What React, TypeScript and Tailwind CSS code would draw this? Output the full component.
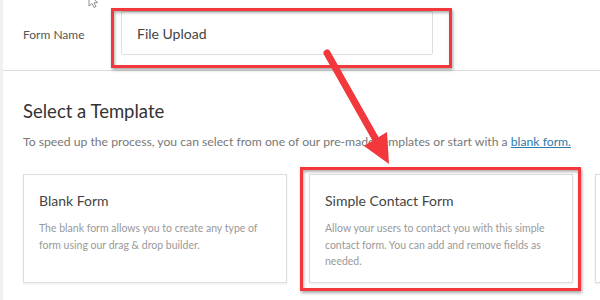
export default function App() {
  return (
    <div
      className="relative w-[600px] h-[300px] overflow-hidden bg-white border-l-[3px] border-[#f1f1f1]"
      style={{ fontFamily: 'Lato, "Open Sans", sans-serif' }}
    >
      {/* Form name row */}
      <div className="flex items-start h-[71px] border-b border-[#dcdcdc]">
        <div className="w-[118px] pl-[20px] pt-[26px] text-[12px] text-[#555]">Form Name</div>
        <div className="mt-[11px] w-[312px] h-[44px] border border-[#dedede] rounded-[2px] flex items-center pl-[15px] text-[14px] text-[#444]">
          File Upload
        </div>
      </div>

      {/* Template section */}
      <div className="pl-[20px] pt-[27px]">
        <h2 className="text-[18.5px] leading-[26px] text-[#333]">Select a Template</h2>
        <p className="mt-[9px] text-[12.2px] leading-[18px] text-[#777] whitespace-nowrap">
          To speed up the process, you can select from one of our pre-made templates or start with a{" "}
          <span className="text-[#2b7bab] underline">blank form.</span>
        </p>

        <div className="mt-[23px] flex gap-[22px]">
          {[
            {
              title: "Blank Form",
              desc: "The blank form allows you to create any type of form using our drag & drop builder.",
            },
            {
              title: "Simple Contact Form",
              desc: "Allow your users to contact you with this simple contact form. You can add and remove fields as needed.",
            },
            { title: "", desc: "" },
          ].map((c, i) => (
            <div
              key={i}
              className="shrink-0 w-[264px] h-[109px] border border-[#dddddd] shadow-[0_1px_2px_rgba(0,0,0,0.08)] pl-[15px] pr-[18px] pt-[15px]"
            >
              <div className="text-[14px] leading-[22px] text-[#444]">{c.title}</div>
              <div className="mt-[8px] text-[10.5px] leading-[16.5px] text-[#999]">{c.desc}</div>
            </div>
          ))}
        </div>
      </div>

      {/* Annotations */}
      <div className="absolute left-[108px] top-[8px] w-[341px] h-[60px] border-[3px] border-[#f2383c] shadow-[1px_2px_3px_rgba(0,0,0,0.35),inset_1px_2px_3px_rgba(0,0,0,0.3)]" />
      <div className="absolute left-[297px] top-[167px] w-[281px] h-[124px] border-[3px] border-[#f2383c] shadow-[1px_2px_3px_rgba(0,0,0,0.35),inset_1px_2px_3px_rgba(0,0,0,0.3)]" />

      <svg className="absolute left-[-3px] top-0" width="600" height="300" viewBox="0 0 600 300">
        <line x1="327" y1="53" x2="375" y2="138" stroke="#f2383c" strokeWidth="7" strokeLinecap="round" />
        <polygon points="389,164 364,146 387,132" fill="#f2383c" />
        {/* mouse cursor */}
        <path
          d="M89 -6 L89 6 L92 3.5 L94 7.5 L96 6.5 L94 2.8 L97.5 2.5 Z"
          fill="#fff"
          stroke="#777"
          strokeWidth="0.8"
        />
      </svg>
    </div>
  );
}
